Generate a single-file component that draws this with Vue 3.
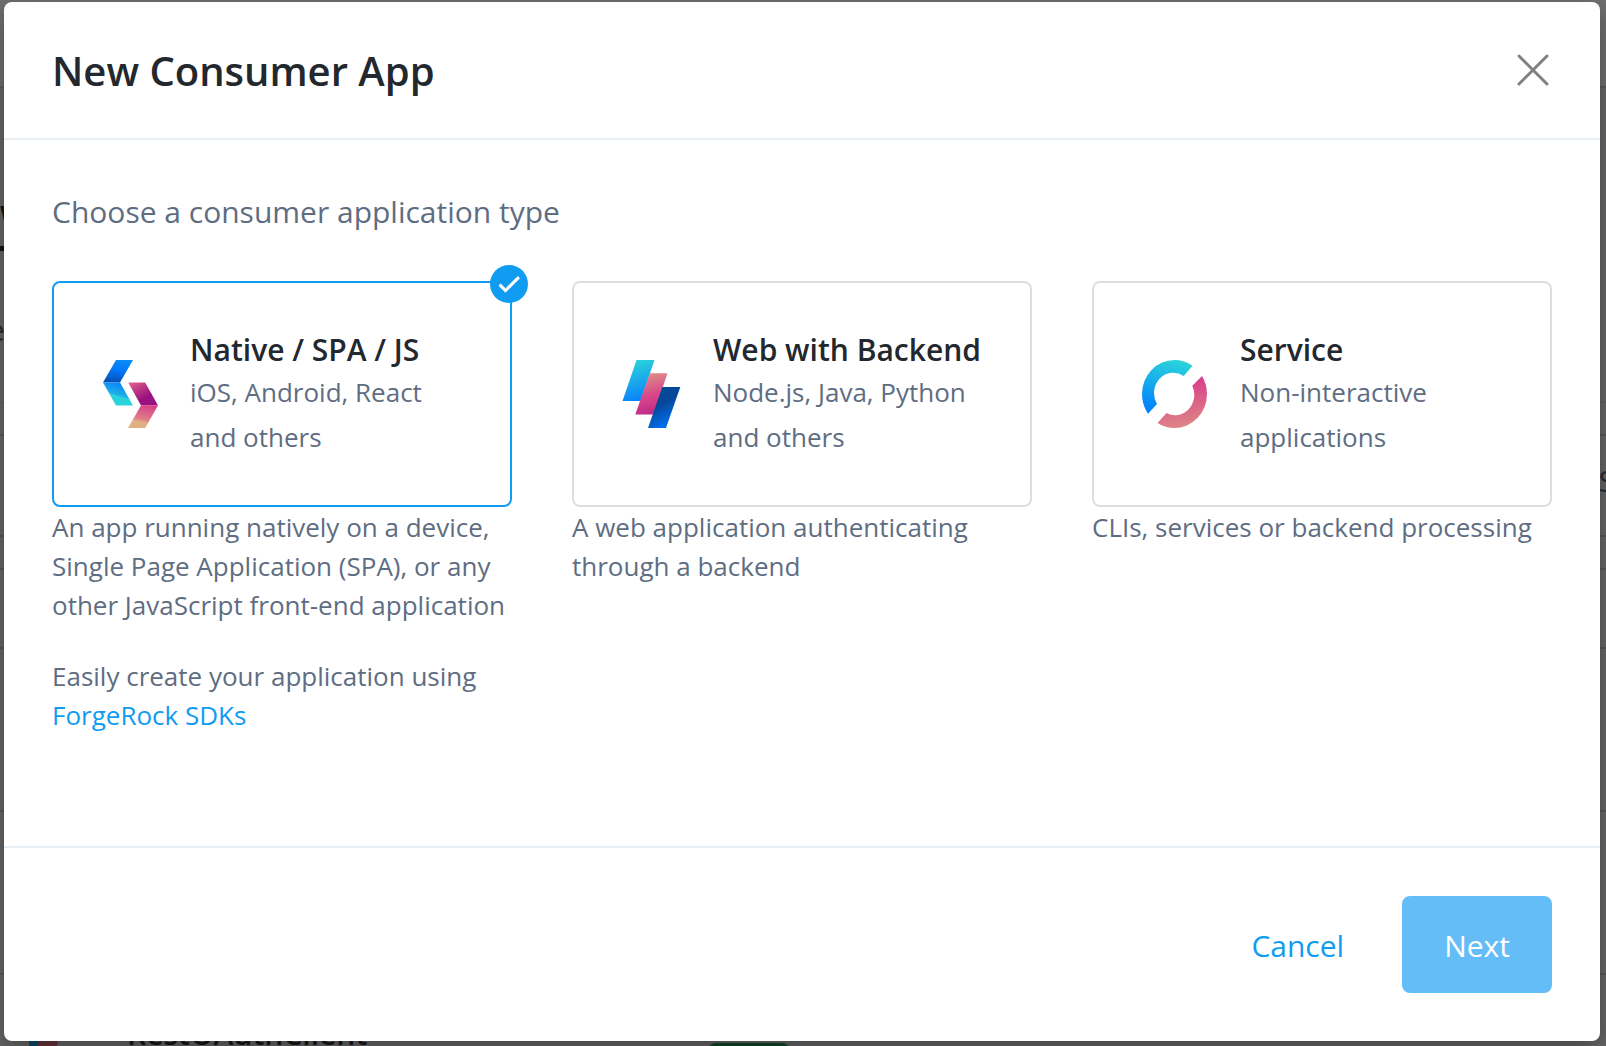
<script setup>
import { ref } from 'vue'

const selected = ref('native')

const types = [
  {
    id: 'native',
    title: 'Native / SPA / JS',
    examples: 'iOS, Android, React and others',
    description:
      'An app running natively on a device, Single Page Application (SPA), or any other JavaScript front-end application'
  },
  {
    id: 'web',
    title: 'Web with Backend',
    examples: 'Node.js, Java, Python and others',
    description: 'A web application authenticating through a backend'
  },
  {
    id: 'service',
    title: 'Service',
    examples: 'Non-interactive applications',
    description: 'CLIs, services or backend processing'
  }
]
</script>

<template>
  <div class="screen">
    <div class="page" aria-hidden="true">
      <div class="page-top"></div>
      <div class="page-tabs"><span class="page-tab">W</span></div>
      <div class="page-intro"><span class="page-intro-text">e</span></div>
      <div class="page-gap"></div>
      <div class="page-toolbar"><span>S</span></div>
      <div class="page-gap"></div>
      <div class="page-columns"></div>
      <div class="page-row"></div>
      <div class="page-row"></div>
      <div class="page-row">
        <svg class="row-icon" width="35" height="40" viewBox="0 0 35 40">
          <path d="M4 0h18L12 40H-8z" fill="#0a4f6c" />
          <path d="M18 0h18L26 40H6z" fill="#6b3540" />
        </svg>
        <span class="row-name">RestOAuthClient</span>
        <span class="row-status"></span>
      </div>
    </div>

    <section class="modal" role="dialog" aria-labelledby="dialog-title">
      <header class="modal-header">
        <h1 id="dialog-title">New Consumer App</h1>
        <button class="close" type="button" aria-label="Close">
          <svg width="40" height="40" viewBox="0 0 40 40">
            <path d="M7 5L35 33M35 5L7 33" stroke="#808080" stroke-width="3" stroke-linecap="round" />
          </svg>
        </button>
      </header>

      <div class="modal-body">
        <p class="lead">Choose a consumer application type</p>
        <div class="types">
          <div v-for="type in types" :key="type.id" class="type">
            <label class="card" :class="{ selected: selected === type.id }">
              <input v-model="selected" class="radio" type="radio" name="app-type" :value="type.id" />

              <svg v-if="type.id === 'native'" class="logo" width="56" height="68" viewBox="12 15 56 68">
                <defs>
                  <linearGradient id="n1" x1="0.6" y1="0" x2="0.4" y2="1">
                    <stop offset="0" stop-color="#0a8cf5" />
                    <stop offset="0.45" stop-color="#0077fb" />
                    <stop offset="1" stop-color="#0550b0" />
                  </linearGradient>
                  <linearGradient id="n2" x1="0.62" y1="0" x2="0.36" y2="0.7">
                    <stop offset="0" stop-color="#0a80fb" />
                    <stop offset="0.75" stop-color="#1fb2e6" />
                    <stop offset="0.8" stop-color="#2ad3da" />
                  </linearGradient>
                  <linearGradient id="n3" x1="0.1" y1="0" x2="0.65" y2="0.7">
                    <stop offset="0" stop-color="#de5f8c" />
                    <stop offset="0.9" stop-color="#99127f" />
                  </linearGradient>
                  <linearGradient id="n4" x1="0.7" y1="0" x2="0.45" y2="0.9">
                    <stop offset="0" stop-color="#d93f89" />
                    <stop offset="0.7" stop-color="#de8087" />
                    <stop offset="0.85" stop-color="#e0b080" />
                  </linearGradient>
                </defs>
                <path d="M26 15H43L30 37.6H13z" fill="url(#n1)" />
                <path d="M13 37.6H30L43 60.6H26z" fill="url(#n2)" />
                <path d="M38.2 37.6H55.2L68 60.4H51z" fill="url(#n3)" />
                <path d="M51 60.4H68L55.2 83H38z" fill="url(#n4)" />
              </svg>

              <svg v-else-if="type.id === 'web'" class="logo" width="59" height="68" viewBox="12 15 59 68">
                <defs>
                  <linearGradient id="w1" x1="0.4" y1="0" x2="0.6" y2="1">
                    <stop offset="0" stop-color="#2ad3da" />
                    <stop offset="1" stop-color="#0a80fb" />
                  </linearGradient>
                  <linearGradient id="w2" x1="0.4" y1="0" x2="0.6" y2="1">
                    <stop offset="0" stop-color="#dd8f88" />
                    <stop offset="0.55" stop-color="#da4489" />
                    <stop offset="1" stop-color="#b82c87" />
                  </linearGradient>
                  <linearGradient id="w3" x1="0.3" y1="0.1" x2="0.7" y2="1">
                    <stop offset="0.35" stop-color="#05489a" />
                    <stop offset="0.4" stop-color="#054ca5" />
                    <stop offset="1" stop-color="#0077fb" />
                  </linearGradient>
                </defs>
                <path d="M26.5 15H44.5L30.5 56H12.5z" fill="url(#w1)" />
                <path d="M39.8 28.3H57.5L43.5 69.5H25.3z" fill="url(#w2)" />
                <path d="M52.3 42H70.3L56 83H38z" fill="url(#w3)" />
              </svg>

              <svg v-else class="logo" width="66" height="68" viewBox="13 15 66 68">
                <defs>
                  <linearGradient id="s1" x1="0.6" y1="0" x2="0.35" y2="1">
                    <stop offset="0" stop-color="#2ad3da" />
                    <stop offset="1" stop-color="#0080ff" />
                  </linearGradient>
                  <linearGradient id="s2" x1="0.6" y1="0" x2="0.75" y2="1">
                    <stop offset="0.1" stop-color="#d9408a" />
                    <stop offset="1" stop-color="#de8a87" />
                  </linearGradient>
                </defs>
                <path
                  d="M63.5 20.7A32.5 34 0 0 0 45.5 15A32.5 34 0 0 0 13 49A32.5 34 0 0 0 19 68.7L28 59A19.2 20.4 0 0 1 54.7 31z"
                  fill="url(#s1)"
                />
                <path
                  d="M73 30.9A32.5 34 0 0 1 78 49A32.5 34 0 0 1 45.5 83A32.5 34 0 0 1 28.5 78L37.5 68A19.2 20.4 0 0 0 63.3 40.7z"
                  fill="url(#s2)"
                />
              </svg>

              <span class="card-text">
                <span class="card-title">{{ type.title }}</span>
                <span class="card-examples">{{ type.examples }}</span>
              </span>

              <span v-if="selected === type.id" class="badge">
                <svg width="28" height="28" viewBox="0 0 24 24">
                  <path
                    d="M9 16.17L4.83 12l-1.42 1.41L9 19 21 7l-1.41-1.41z"
                    fill="#fff"
                    stroke="#fff"
                    stroke-width="0.8"
                  />
                </svg>
              </span>
            </label>
            <div class="about">
              <p class="description">{{ type.description }}</p>
              <p v-if="type.id === 'native'" class="description">
                Easily create your application using <a href="#">ForgeRock SDKs</a>
              </p>
            </div>
          </div>
        </div>
      </div>

      <footer class="modal-footer">
        <button class="btn link" type="button">Cancel</button>
        <button class="btn primary" type="button">Next</button>
      </footer>
    </section>
  </div>
</template>

<style>
body {
  margin: 0;
  background: #646464;
}
</style>

<style scoped>
.screen {
  position: relative;
  box-sizing: border-box;
  min-height: 100vh;
  padding: 2px 6px 5px 4px;
  overflow: hidden;
  font-family: 'Open Sans', 'Noto Sans', sans-serif;
  color: #5e6d82;
}

/* Dimmed page behind the dialog */
.page {
  position: absolute;
  inset: 0;
  display: flex;
  flex-direction: column;
  overflow: hidden;
  background: #686767;
  color: #14171a;
  font-size: 30px;
  line-height: 42px;
}
.page > div {
  box-sizing: border-box;
  flex: none;
}
.page-top {
  height: 88px;
  background: #707070;
  border-bottom: 2px solid #5b5d60;
}
.page-tabs {
  display: flex;
  height: 163px;
  align-items: flex-end;
}
.page-tab {
  width: 40px;
  padding-bottom: 8px;
  border-bottom: 5px solid #14171a;
  font-weight: 600;
}
.page-intro {
  height: 152px;
  padding-top: 58px;
  border-bottom: 1px solid #5b5d60;
}
.page-intro-text {
  margin-left: -12px;
  color: #262c34;
}
.page-toolbar {
  display: flex;
  height: 101px;
  padding-top: 24px;
  justify-content: flex-end;
  border-bottom: 2px solid #55585b;
  color: #262c34;
}
.page-toolbar span {
  margin-right: -9px;
}
.page-gap {
  height: 33px;
  border-bottom: 2px solid #55585b;
}
.page-columns {
  height: 79px;
  border-bottom: 2px solid #55585b;
}
.page-row {
  display: flex;
  height: 163px;
  padding: 38px 29px;
  gap: 63px;
  border-bottom: 2px solid #55585b;
}
.row-name {
  font-weight: 600;
}
.row-status {
  width: 82px;
  height: 40px;
  margin: 30px 0 0 278px;
  border-radius: 8px;
  background: #0d4a26;
}

/* Dialog */
.modal {
  position: relative;
  border-radius: 8px;
  background: #fff;
  box-shadow: 0 8px 24px rgba(0, 0, 0, 0.35);
}
.modal-header {
  display: flex;
  align-items: center;
  justify-content: space-between;
  padding: 49px 48px 47px;
  border-bottom: 2px solid #e7eef4;
}
h1 {
  margin: 0;
  color: #23282e;
  font-size: 40px;
  font-weight: 600;
  line-height: 40px;
}
.close {
  display: flex;
  padding: 0;
  border: 0;
  background: none;
}
.modal-body {
  padding: 49px 48px 111px;
}
.lead {
  margin: 0 0 47px;
  font-size: 30px;
  line-height: 45px;
}
.types {
  display: grid;
  grid-template-columns: repeat(3, minmax(0, 1fr));
  gap: 60px;
}
.card {
  position: relative;
  display: flex;
  box-sizing: border-box;
  min-height: 226px;
  align-items: center;
  gap: 32px;
  padding: 44px 48px;
  border: 2px solid #dedede;
  border-radius: 8px;
}
.card.selected {
  border-color: #109cf1;
}
.radio {
  position: absolute;
  width: 1px;
  height: 1px;
  margin: 0;
  opacity: 0;
}
.logo {
  flex: none;
}
.card-text {
  display: flex;
  flex-direction: column;
}
.card-title {
  padding-top: 2px;
  color: #23282e;
  font-size: 30px;
  font-weight: 600;
  line-height: 40px;
  white-space: nowrap;
}
.card-examples {
  font-size: 26px;
  line-height: 45px;
}
.badge {
  position: absolute;
  top: -18px;
  right: -18px;
  display: flex;
  width: 38px;
  height: 38px;
  align-items: center;
  justify-content: center;
  border-radius: 50%;
  background: #109cf1;
}
.about {
  padding-top: 1px;
}
.description {
  margin: 0;
  font-size: 26px;
  line-height: 39px;
}
.description + .description {
  margin-top: 32px;
}
a {
  color: #109cf1;
  text-decoration: none;
}
.modal-footer {
  display: flex;
  justify-content: flex-end;
  gap: 16px;
  padding: 48px;
  border-top: 2px solid #e7eef4;
}
.btn {
  padding: 25px 40px 23px;
  border: 2px solid transparent;
  border-radius: 8px;
  font-family: inherit;
  font-size: 30px;
  line-height: 45px;
}
.btn.link {
  background: none;
  color: #109cf1;
}
.btn.primary {
  border-color: #64bdf7;
  background: #64bdf7;
  color: #fff;
}
</style>
